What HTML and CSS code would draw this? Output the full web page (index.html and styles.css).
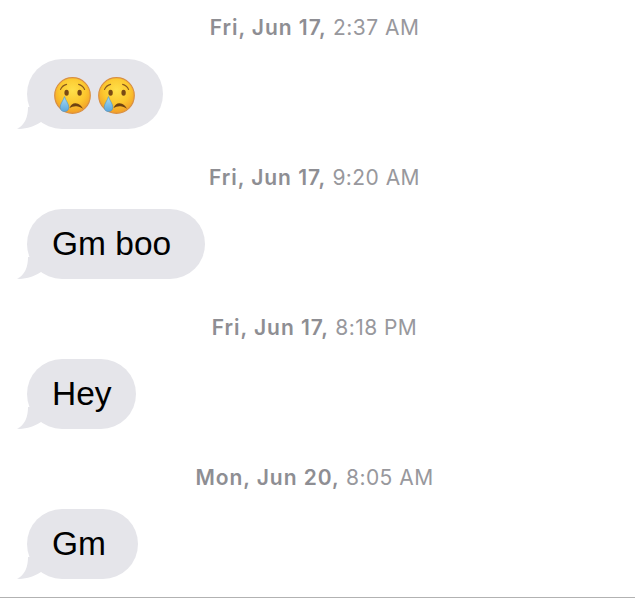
FILE: index.html
```html
<!DOCTYPE html>
<html lang="en">
<head>
    <meta charset="UTF-8">
    <meta name="viewport" content="width=device-width, initial-scale=1.0">
    <title>Messages</title>
    <link rel="stylesheet" href="styles.css">
</head>
<body>
    <!-- shared shapes for the bubble tail and the crying face -->
    <svg class="defs" width="0" height="0" aria-hidden="true">
        <defs>
            <radialGradient id="faceFill" cx="50%" cy="36%" r="62%">
                <stop offset="0%" stop-color="#ffe04a"/>
                <stop offset="60%" stop-color="#fcc72e"/>
                <stop offset="100%" stop-color="#f2a028"/>
            </radialGradient>
            <linearGradient id="tearFill" x1="0" y1="0" x2="0" y2="1">
                <stop offset="0%" stop-color="#a8dcf5"/>
                <stop offset="100%" stop-color="#5aa6dc"/>
            </linearGradient>
            <symbol id="cryFace" viewBox="0 0 37 37">
                <circle cx="18.5" cy="18.5" r="17.8" fill="url(#faceFill)" stroke="#d98f42" stroke-width="1.2"/>
                <path d="M6.5 12.5 C7.8 9.6 10 8 12.6 7.4" fill="none" stroke="#8a5a1e" stroke-width="1.1" stroke-linecap="round"/>
                <path d="M24.6 7.4 C27.2 8 29.4 9.6 30.6 12.5" fill="none" stroke="#8a5a1e" stroke-width="1.1" stroke-linecap="round"/>
                <ellipse cx="12.6" cy="15.8" rx="2.2" ry="3" fill="#7a4a14"/>
                <ellipse cx="25.6" cy="15.8" rx="2.2" ry="3" fill="#7a4a14"/>
                <path d="M15.5 31 C16.8 28 19 26 21.6 26.2 C25 26.4 27.6 28.6 29 31.8 C26.4 29.8 24 29 21.6 29.2 C19.4 29.4 17.4 30 15.5 31 Z" fill="#6e4212"/>
                <path d="M10.5 19.6 C11.6 23.4 14.8 26.8 14.8 30.2 C14.8 33 13 34.6 10.5 34.6 C8 34.6 6.2 33 6.2 30.2 C6.2 26.8 9.4 23.4 10.5 19.6 Z" fill="url(#tearFill)" stroke="#4d93c6" stroke-width=".6"/>
            </symbol>
            <symbol id="bubbleTail" viewBox="0 0 30 30">
                <path d="M11 8 C11 18 8 26 0 29.8 C9 30.4 17 27.4 24 23 L24 8 Z" fill="#e5e5ea"/>
            </symbol>
        </defs>
    </svg>

    <div class="thread">
        <section class="group">
            <p class="stamp"><b>Fri, Jun 17,</b> 2:37 AM</p>
            <div class="bubble bubble-emoji">
                <svg class="tail"><use href="#bubbleTail"/></svg>
                <svg class="emoji" role="img" aria-label="crying face"><use href="#cryFace"/></svg>
                <svg class="emoji" role="img" aria-label="crying face"><use href="#cryFace"/></svg>
            </div>
        </section>

        <section class="group">
            <p class="stamp"><b>Fri, Jun 17,</b> 9:20 AM</p>
            <div class="bubble">
                <svg class="tail"><use href="#bubbleTail"/></svg>
                Gm boo
            </div>
        </section>

        <section class="group">
            <p class="stamp"><b>Fri, Jun 17,</b> 8:18 PM</p>
            <div class="bubble bubble-hey">
                <svg class="tail"><use href="#bubbleTail"/></svg>
                Hey
            </div>
        </section>

        <section class="group">
            <p class="stamp"><b>Mon, Jun 20,</b> 8:05 AM</p>
            <div class="bubble bubble-gm">
                <svg class="tail"><use href="#bubbleTail"/></svg>
                Gm
            </div>
        </section>
    </div>
</body>
</html>
```

FILE: styles.css
```css
html, body {
    margin: 0;
    padding: 0;
    background-color: #fff;
}

.defs {
    position: absolute;
}

.thread {
    height: 588px;
    overflow: hidden;
    border-bottom: 1px solid #b2b2b2;
    padding-top: 9px;
}

.group {
    height: 150px;
}

.stamp {
    margin: 0 0 18px;
    padding-right: 6px;
    height: 32px;
    line-height: 38px;
    text-align: center;
    font-family: "Inter", "Liberation Sans", sans-serif;
    font-size: 21px;
    letter-spacing: 0.45px;
    color: #98989d;
}

.stamp b {
    font-weight: 600;
    letter-spacing: 0.95px;
    color: #8e8e93;
}

.bubble {
    position: relative;
    display: inline-flex;
    align-items: center;
    height: 70px;
    margin-left: 27px;
    padding: 0 34px 0 25px;
    border-radius: 35px;
    background-color: #e5e5ea;
    font-family: "Liberation Sans", sans-serif;
    font-size: 33.5px;
    color: #000;
}

.bubble-emoji {
    gap: 7px;
    padding: 0 28px 0 27px;
}

.bubble-hey {
    padding-right: 24px;
}

.bubble-gm {
    padding-right: 32px;
}

.emoji {
    width: 37px;
    height: 37px;
    margin-top: 2px;
}

.tail {
    position: absolute;
    left: -10px;
    bottom: 0;
    width: 30px;
    height: 30px;
}
```
